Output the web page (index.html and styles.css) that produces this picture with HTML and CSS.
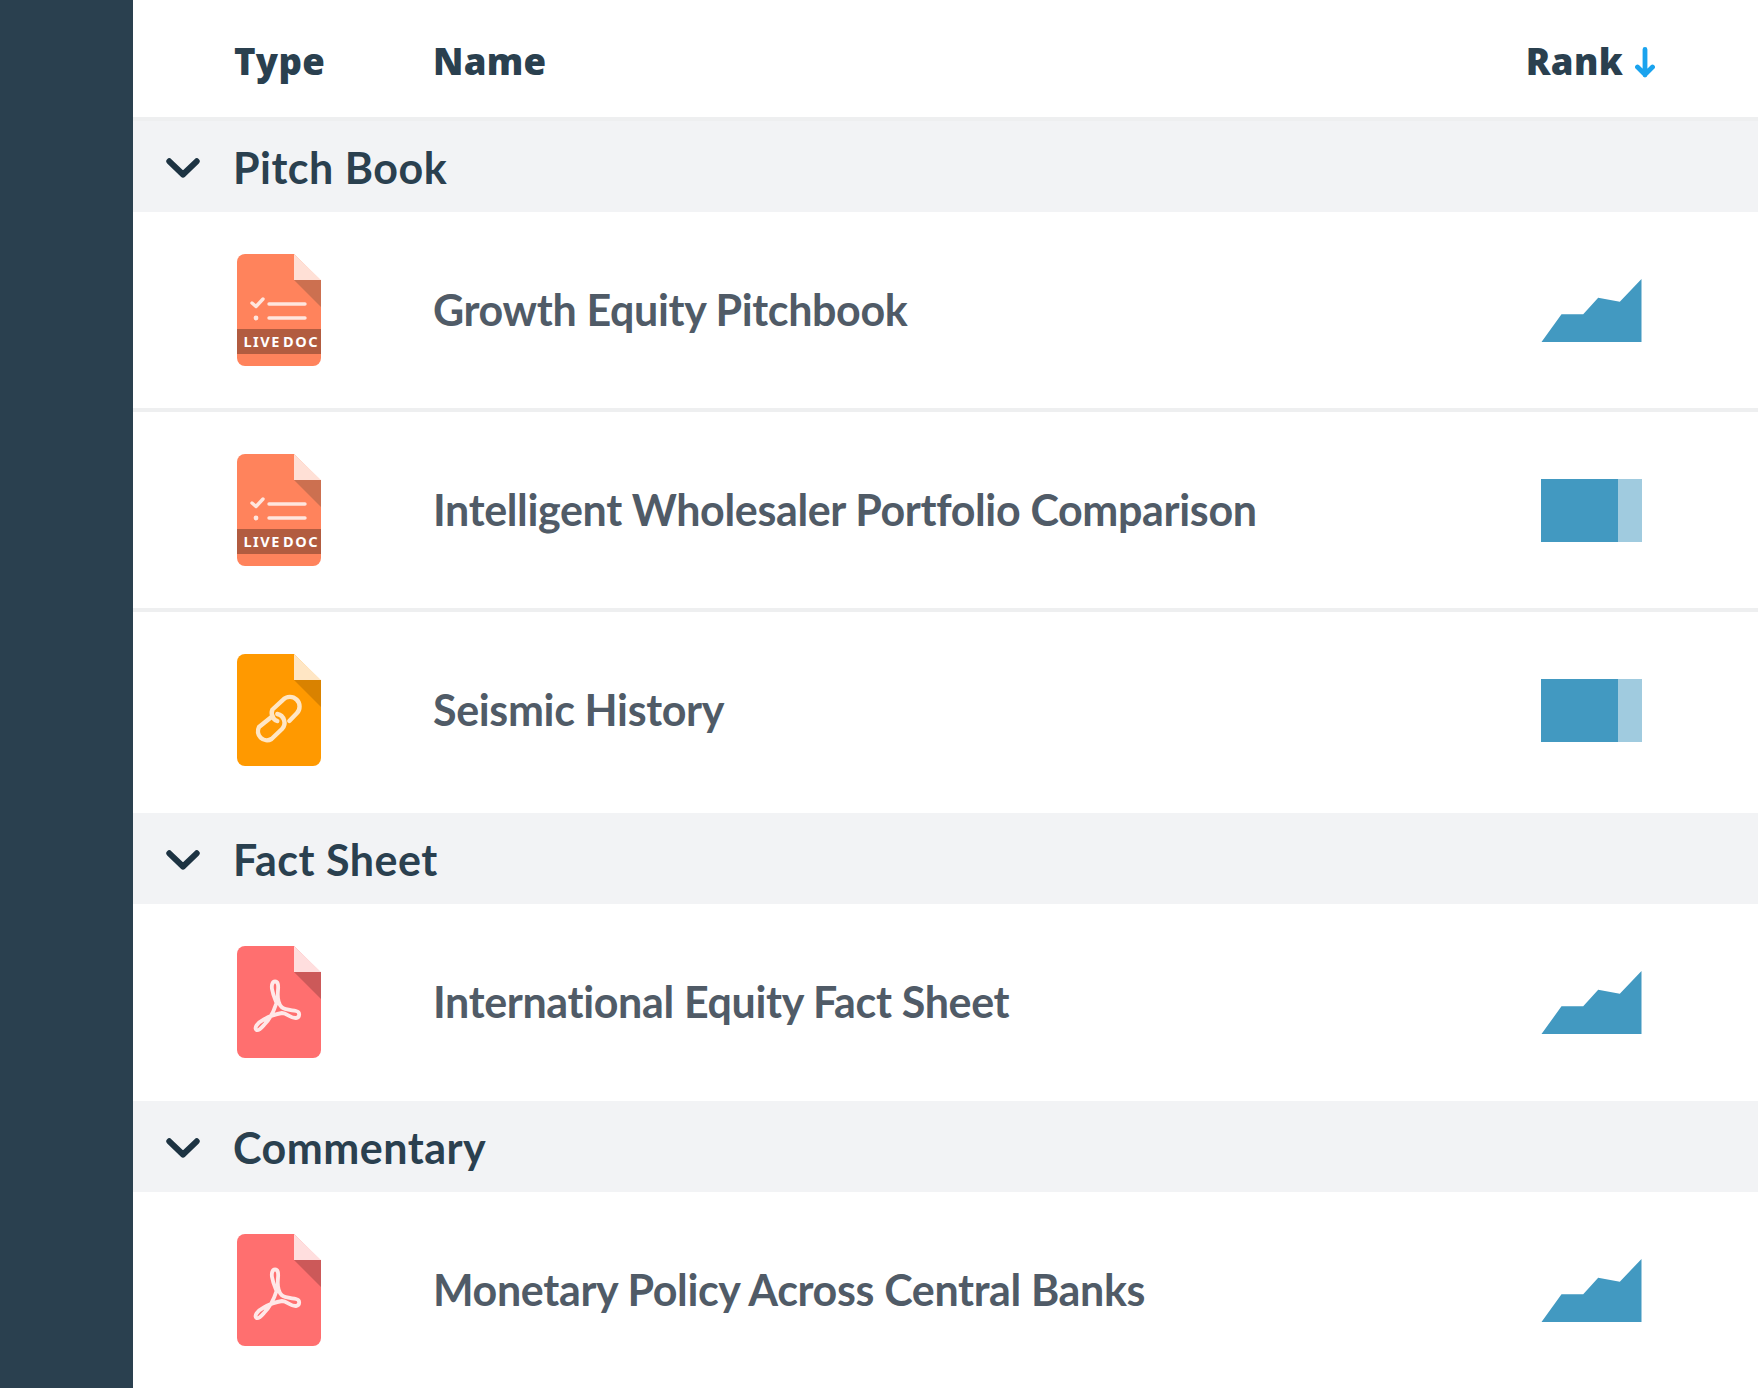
FILE: index.html
```html
<!DOCTYPE html>
<html lang="en">
<head>
<meta charset="utf-8">
<title>Documents</title>
<link rel="stylesheet" href="styles.css">
</head>
<body>
<svg class="defs" width="0" height="0" aria-hidden="true">
  <defs>
    <symbol id="chart" viewBox="0 0 100 63"><polygon fill="#4299c1" points="0,63 20,35.3 41.7,35.3 56.7,18.7 78.3,22.7 100,0 100,63"/></symbol>
    <symbol id="chev" viewBox="0 0 34 20"><path d="M3.300 3.300 L17 16.500 L30.700 3.300" fill="none" stroke="#1d3342" stroke-width="6" stroke-linecap="round" stroke-linejoin="round"/></symbol>
    <symbol id="live" viewBox="0 0 84 112">
      <path fill="#ff835c" d="M8 0H57L84 27V104a8 8 0 0 1-8 8H8a8 8 0 0 1-8-8V8a8 8 0 0 1 8-8Z"/>
      <polygon fill="#ffe0d6" points="57,0 84,26 57,26"/>
      <polygon fill="#cc7050" points="57,26 84,26 84,53"/>
      <rect y="75" width="84" height="25" fill="#b25c40"/>
      <path d="M15 49l4 3.500 7-7.500M32 50H68M32 64H68" fill="none" stroke="#ffe6de" stroke-width="3.400" stroke-linecap="round" stroke-linejoin="round"/>
      <circle cx="19" cy="64" r="2.400" fill="#ffe6de"/>
    </symbol>
    <symbol id="link" viewBox="0 0 84 112">
      <path fill="#ff9900" d="M8 0H57L84 27V104a8 8 0 0 1-8 8H8a8 8 0 0 1-8-8V8a8 8 0 0 1 8-8Z"/>
      <polygon fill="#ffe6c4" points="57,0 84,26 57,26"/>
      <polygon fill="#d98200" points="57,26 84,26 84,53"/>
      <path d="M52.300 67 L59.800 59.300 A9.500 9.500 0 0 0 46 45.800 L35.500 55.500 A8.500 8.500 0 0 0 40.300 67 M35.700 62 L22 73 A9 9 0 0 0 34.500 85 L45 75 A9 9 0 0 0 40.300 60" fill="none" stroke="#ffe6c4" stroke-width="4.400" stroke-linecap="round" stroke-linejoin="round"/>
    </symbol>
    <symbol id="pdf" viewBox="0 0 84 112">
      <path fill="#ff6f6f" d="M8 0H57L84 27V104a8 8 0 0 1-8 8H8a8 8 0 0 1-8-8V8a8 8 0 0 1 8-8Z"/>
      <polygon fill="#ffdede" points="57,0 84,26 57,26"/>
      <polygon fill="#cc5959" points="57,26 84,26 84,53"/>
      <path d="M38 35.500C35 35.500 34.500 40 35 43C36 49 38 53 39.500 57C37 65 32 74 27 79C24 82.500 21 85 19.500 84C17 82 20 77 26 74C32 70.500 38 68 45 67C50 67 54 72.500 59 72C63 71.500 63.500 66 59 65C54 64 48 64 44.500 61C41 57 40.500 49 41 44C41.500 39 41 35.500 38 35.500Z" fill="none" stroke="#ffe8e8" stroke-width="3.800" stroke-linejoin="round"/>
    </symbol>
  </defs>
</svg>
<div class="app">
  <aside class="side"></aside>
  <main class="table">
    <header class="head">
      <span class="col-type">Type</span>
      <span class="col-name">Name</span>
      <span class="col-rank">Rank
        <svg class="arrow" viewBox="0 0 20 31" aria-hidden="true"><path d="M10 2.500V28M2.500 20L10 27.500L17.500 20" fill="none" stroke="#1aa3ee" stroke-width="4.800" stroke-linecap="round" stroke-linejoin="round"/></svg>
      </span>
    </header>

    <section class="group">
      <svg class="chev"><use href="#chev"/></svg><h2>Pitch Book</h2>
    </section>
    <div class="row line">
      <span class="doc"><svg class="ico" viewBox="0 0 84 112"><use href="#live"/><text class="ld" x="6.500" y="92.800" textLength="74">LIVE DOC</text></svg></span>
      <span class="title">Growth Equity Pitchbook</span>
      <svg class="chart"><use href="#chart"/></svg>
    </div>
    <div class="row line">
      <span class="doc"><svg class="ico" viewBox="0 0 84 112"><use href="#live"/><text class="ld" x="6.500" y="92.800" textLength="74">LIVE DOC</text></svg></span>
      <span class="title">Intelligent Wholesaler Portfolio Comparison</span>
      <div class="bar"><i class="bar-fill"></i><i class="bar-rest"></i></div>
    </div>
    <div class="row tall">
      <span class="doc"><svg class="ico"><use href="#link"/></svg></span>
      <span class="title">Seismic History</span>
      <div class="bar"><i class="bar-fill"></i><i class="bar-rest"></i></div>
    </div>

    <section class="group">
      <svg class="chev"><use href="#chev"/></svg><h2>Fact Sheet</h2>
    </section>
    <div class="row plain">
      <span class="doc"><svg class="ico"><use href="#pdf"/></svg></span>
      <span class="title">International Equity Fact Sheet</span>
      <svg class="chart"><use href="#chart"/></svg>
    </div>

    <section class="group">
      <svg class="chev"><use href="#chev"/></svg><h2>Commentary</h2>
    </section>
    <div class="row plain">
      <span class="doc"><svg class="ico"><use href="#pdf"/></svg></span>
      <span class="title">Monetary Policy Across Central Banks</span>
      <svg class="chart"><use href="#chart"/></svg>
    </div>
  </main>
</div>
</body>
</html>
```
FILE: styles.css
```css
html, body { margin: 0; height: 100%; background: #fff; overflow: hidden; }
body { font-family: "Lato", "Noto Sans", sans-serif; }
.defs { position: absolute; }
.app { display: flex; height: 1388px; }
.side { width: 133px; flex: none; background: #2a404f; }
.table { flex: 1; min-width: 0; }

.head {
  height: 113px;
  padding: 4px 103px 0 101px;
  border-bottom: 4px solid #eeeff0;
  display: flex;
  align-items: center;
  color: #2a404f;
  font-family: "Noto Sans", sans-serif;
  font-size: 36.500px;
  font-weight: 900;
  font-kerning: none;
  letter-spacing: 0.3px;
}
.col-type { width: 199px; }
.col-name { flex: 1; }
.col-rank { display: flex; align-items: center; gap: 12px; }
.arrow { width: 20px; height: 31px; margin-top: 4px; }

.group {
  height: 91px;
  background: #f2f3f5;
  display: flex;
  align-items: center;
  padding-left: 33px;
}
.chev { width: 34px; height: 20px; margin: 3px 33px 0 0; }
.group h2 { margin: 1px 0 0; font-size: 43px; font-weight: 700; color: #2a404f; letter-spacing: 0.5px; }

.row {
  display: flex;
  align-items: center;
  padding: 0 116px 0 104px;
  height: 197px;
}
.line { height: 196px; border-bottom: 4px solid #eeeff0; }
.tall { height: 196px; padding-bottom: 5px; }
.doc { width: 196px; flex: none; display: flex; }
.plain .doc { margin-bottom: 1px; }
.ico { width: 84px; height: 112px; }
.ld { font-size: 14.500px; font-weight: 700; fill: #fff; font-family: "Noto Sans", sans-serif; word-spacing: -3px; }
.title { flex: 1; font-size: 43px; font-weight: 700; color: #505b67; letter-spacing: -0.35px; margin-bottom: 2px; }
.chart { width: 101px; height: 63px; }
.bar { width: 101px; height: 63px; display: flex; }
.bar-fill { width: 77px; background: #4299c1; }
.bar-rest { flex: 1; background: #a0cbdf; }
```
